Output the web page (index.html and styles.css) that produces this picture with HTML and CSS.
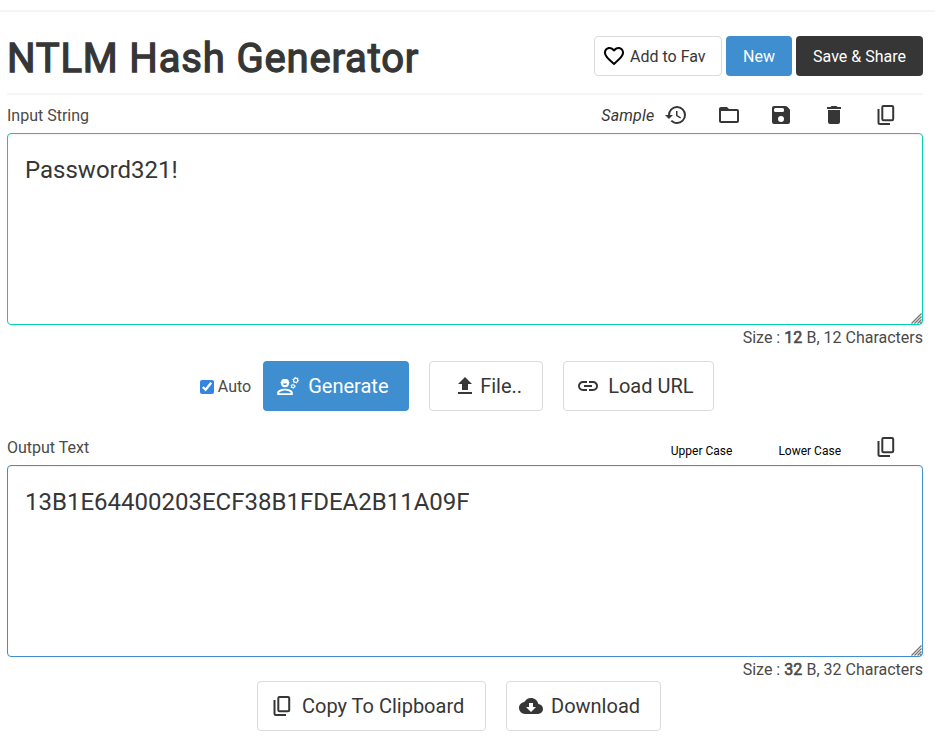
FILE: index.html
```html
<!DOCTYPE html>
<html lang="en">
<head>
<meta charset="utf-8">
<title>NTLM Hash Generator</title>
<link rel="stylesheet" href="styles.css">
</head>
<body>
<svg class="sprite" aria-hidden="true">
  <symbol id="copy" viewBox="0 0 24 24"><g fill="none" stroke="currentColor" stroke-width="2"><rect x="8.300" y="3" width="10.900" height="14.200" rx="1.200"/><path d="M4.500 6v13.500q0 1.500 1.500 1.500H16"/></g></symbol>
  <symbol id="grip" viewBox="0 0 11 11"><path d="M.5 10.500l10-10M3.500 10.500l7-7M6.500 10.500l4-4M9 10.500L10.500 9" fill="none" stroke="#777" stroke-width="1.300"/></symbol>
</svg>
<main class="page">
  <header class="head">
    <h1>NTLM Hash Generator</h1>
    <div class="actions">
      <button class="btn fav"><svg class="icon" viewBox="0 0 24 24"><path d="M12.1,18.55L12,18.65L11.89,18.55C7.14,14.24 4,11.39 4,8.5C4,6.5 5.5,5 7.5,5C9.04,5 10.54,6 11.07,7.36H12.93C13.46,6 14.96,5 16.5,5C18.5,5 20,6.5 20,8.5C20,11.39 16.86,14.24 12.1,18.55M16.5,3C14.76,3 13.09,3.81 12,5.08C10.91,3.81 9.24,3 7.5,3C4.42,3 2,5.41 2,8.5C2,12.27 5.4,15.36 10.55,20.03L12,21.35L13.45,20.03C18.6,15.36 22,12.27 22,8.5C22,5.41 19.58,3 16.5,3Z"/></svg><span>Add to Fav</span></button>
      <button class="btn new"><span>New</span></button>
      <button class="btn share"><span>Save &amp; Share</span></button>
    </div>
  </header>
  <section>
    <div class="bar">
      <label for="input">Input String</label>
      <div class="tools">
        <em>Sample</em>
        <svg class="icon history" viewBox="0 0 24 24"><path d="M13.5,8H12V13L16.28,15.54L17,14.33L13.5,12.25V8M13,3A9,9 0 0,0 4,12H1L4.96,16.03L9,12H6A7,7 0 0,1 13,5A7,7 0 0,1 20,12A7,7 0 0,1 13,19C11.07,19 9.32,18.21 8.06,16.94L6.64,18.36C8.27,20 10.5,21 13,21A9,9 0 0,0 22,12A9,9 0 0,0 13,3"/></svg>
        <svg class="icon" viewBox="0 0 24 24"><path d="M20,18H4V8H20M20,6H12L10,4H4C2.89,4 2,4.89 2,6V18A2,2 0 0,0 4,20H20A2,2 0 0,0 22,18V8C22,6.89 21.1,6 20,6Z"/></svg>
        <svg class="icon" viewBox="0 0 24 24"><path fill-rule="evenodd" d="M6.500 9H13.500A1.500 1.500 0 0 0 15 7.500V6.500A1.500 1.500 0 0 0 13.500 5H6.500A1.500 1.500 0 0 0 5 6.500V7.500A1.500 1.500 0 0 0 6.500 9ZM12 19A3 3 0 0 1 9 16A3 3 0 0 1 12 13A3 3 0 0 1 15 16A3 3 0 0 1 12 19ZM16.500 3H5A2 2 0 0 0 3 5V19A2 2 0 0 0 5 21H19A2 2 0 0 0 21 19V7.500Q21 6.500 20.200 5.700L18.300 3.800Q17.500 3 16.500 3Z"/></svg>
        <svg class="icon" viewBox="0 0 24 24"><path d="M19,4H15.5L14.5,3H9.5L8.5,4H5V6H19M6,19A2,2 0 0,0 8,21H16A2,2 0 0,0 18,19V7H6V19Z"/></svg>
        <svg class="icon"><use href="#copy"/></svg>
      </div>
    </div>
    <div class="field"><textarea id="input" class="area input" spellcheck="false">Password321!</textarea><svg class="grip"><use href="#grip"/></svg></div>
    <p class="size">Size : <b>12</b> B, 12 Characters</p>
  </section>
  <div class="row controls">
    <label class="auto"><input type="checkbox" checked><span>Auto</span></label>
    <button class="btn big generate"><svg class="icon" viewBox="0 0 24 24"><path fill-rule="evenodd" d="M1.200 21v-2.300c0-2.800 4.700-4 7.800-4s7.800 1.200 7.800 4V21zM3.200 19.200h11.600c0-1.400-3.400-2.600-5.800-2.600s-5.800 1.200-5.800 2.600z"/><path fill-rule="evenodd" d="M4.500 9.200V8.200h.5q0-2.300 2-3.300h4q2 1 2 3.300h.5v1H13a4 4 0 0 1-8 0zM6.900 9.400a2.150 2 0 0 0 4.200 0z"/><g fill="none" stroke="currentColor"><circle cx="19.700" cy="6.200" r="2.100" stroke-width="1.200"/><circle cx="19.700" cy="6.200" r="2.900" stroke-width="1" stroke-dasharray="1.100 1.937"/><circle cx="17" cy="12.300" r="1.500" stroke-width="1.100"/><circle cx="17" cy="12.300" r="2.200" stroke-width=".8" stroke-dasharray=".9 1.404"/></g></svg>Generate</button>
    <button class="btn big file"><svg class="icon" viewBox="0 0 24 24"><path d="M9,16V10H5L12,3L19,10H15V16H9M5,20V18H19V20H5Z"/></svg>File..</button>
    <button class="btn big url"><svg class="icon" viewBox="0 0 24 24"><path d="M3.9,12C3.9,10.290 5.290,8.900 7,8.900H11V7H7A5,5 0 0,0 2,12A5,5 0 0,0 7,17H11V15.100H7C5.290,15.100 3.900,13.710 3.900,12M8,13H16V11H8V13M17,7H13V8.900H17C18.710,8.900 20.100,10.290 20.100,12C20.100,13.710 18.710,15.100 17,15.100H13V17H17A5,5 0 0,0 22,12A5,5 0 0,0 17,7Z"/></svg>Load URL</button>
  </div>
  <section class="out">
    <div class="bar">
      <label for="output">Output Text</label>
      <div class="cases"><span>Upper Case</span><span>Lower Case</span><svg class="icon"><use href="#copy"/></svg></div>
    </div>
    <div class="field"><textarea id="output" class="area output" spellcheck="false">13B1E64400203ECF38B1FDEA2B11A09F</textarea><svg class="grip"><use href="#grip"/></svg></div>
    <p class="size">Size : <b>32</b> B, 32 Characters</p>
  </section>
  <div class="row downloads">
    <button class="btn big clip"><svg class="icon"><use href="#copy"/></svg>Copy To Clipboard</button>
    <button class="btn big down"><svg class="icon" viewBox="0 0 24 24"><path d="M17,13L12,18L7,13H10V9H14V13M19.350,10.030C18.670,6.590 15.640,4 12,4C9.110,4 6.600,5.640 5.350,8.030C2.340,8.360 0,10.900 0,14A6,6 0 0,0 6,20H19A5,5 0 0,0 24,15C24,12.360 21.950,10.220 19.350,10.030Z"/></svg>Download</button>
  </div>
</main>
</body>
</html>
```
FILE: styles.css
```css
* { box-sizing: border-box; }
body { margin: 0; padding-top: 10px; background: #fff; color: #4a4a4a; font: 16px/24px Roboto, sans-serif; overflow: hidden; }
h1, p { margin: 0; }
.sprite { position: absolute; width: 0; height: 0; }
.page { border-top: 2px solid #f5f5f5; padding: 0 12px 0 7px; }
.head { display: flex; justify-content: space-between; height: 83px; border-bottom: 2px solid #f5f5f5; padding-top: 24px; }
h1 { color: #363636; font-size: 40px; font-weight: 400; line-height: 46px; letter-spacing: .83px; -webkit-text-stroke: 1.300px #363636; white-space: nowrap; }
.actions { display: flex; gap: 4px; }
.icon { width: 24px; height: 24px; fill: currentColor; flex: none; }
.btn { display: flex; align-items: center; justify-content: center; height: 40px; padding: 0; border: 1px solid #dbdbdb; border-radius: 4px; background: #fff; color: #363636; font: 16px/24px Roboto, sans-serif; white-space: nowrap; }
.btn span, .auto span { padding-top: 2px; }
.fav { width: 128px; justify-content: flex-start; padding-left: 7px; gap: 4px; }
.fav .icon { color: #000; }
.new { width: 66px; background: #3e8ed0; border-color: transparent; color: #fff; }
.share { width: 127px; background: #363636; border-color: transparent; color: #fff; }
.bar { display: flex; justify-content: space-between; height: 38px; padding-top: 8px; }
.bar label, .tools em { padding-top: 1px; }
.tools { display: flex; gap: 28.400px; padding-right: 25px; color: #363636; }
.tools em { margin-right: 1px; letter-spacing: .2px; }
.tools .history { margin-left: -19.400px; }
.field { position: relative; height: 192px; }
.grip { position: absolute; right: 1px; bottom: 1px; width: 11px; height: 11px; }
.area { display: block; width: 916px; height: 192px; margin: 0; padding: 18px 17px; border: 1px solid #00d1b2; border-radius: 4px; outline: 0; resize: none; box-shadow: inset 0 1px 2px rgba(10,10,10,.05); color: #363636; font: 24px/36px Roboto, sans-serif; }
.output { border-color: #3e8ed0; }
.size { text-align: right; height: 24px; padding-top: 1px; }
.size b { font-weight: 400; -webkit-text-stroke: .6px #4a4a4a; letter-spacing: .15px; }
.row { display: flex; gap: 20px; justify-content: center; }
.controls { margin-top: 12px; padding-right: 16px; }
.downloads { padding-right: 12px; }
.big { height: 50px; font-size: 20px; justify-content: flex-start; }
.auto { display: flex; align-items: center; gap: 4px; margin-right: -8px; }
.auto input { margin: 1px 0 0; width: 14px; height: 14px; accent-color: #3584e4; }
.generate { width: 146px; padding-left: 12px; gap: 8px; background: #3e8ed0; border-color: transparent; color: #fff; }
.file { width: 114px; padding-left: 23px; gap: 3px; }
.url { width: 151px; padding-left: 12px; gap: 8px; }
.out { margin-top: 16px; }
.cases { display: flex; color: #000; font-size: 12px; line-height: 32px; padding-right: 25px; gap: 46px; }
.cases .icon { color: #363636; margin-left: -13px; }
.clip { width: 229px; padding-left: 12px; gap: 8px; }
.down { width: 155px; padding-left: 12px; gap: 8px; }
```
